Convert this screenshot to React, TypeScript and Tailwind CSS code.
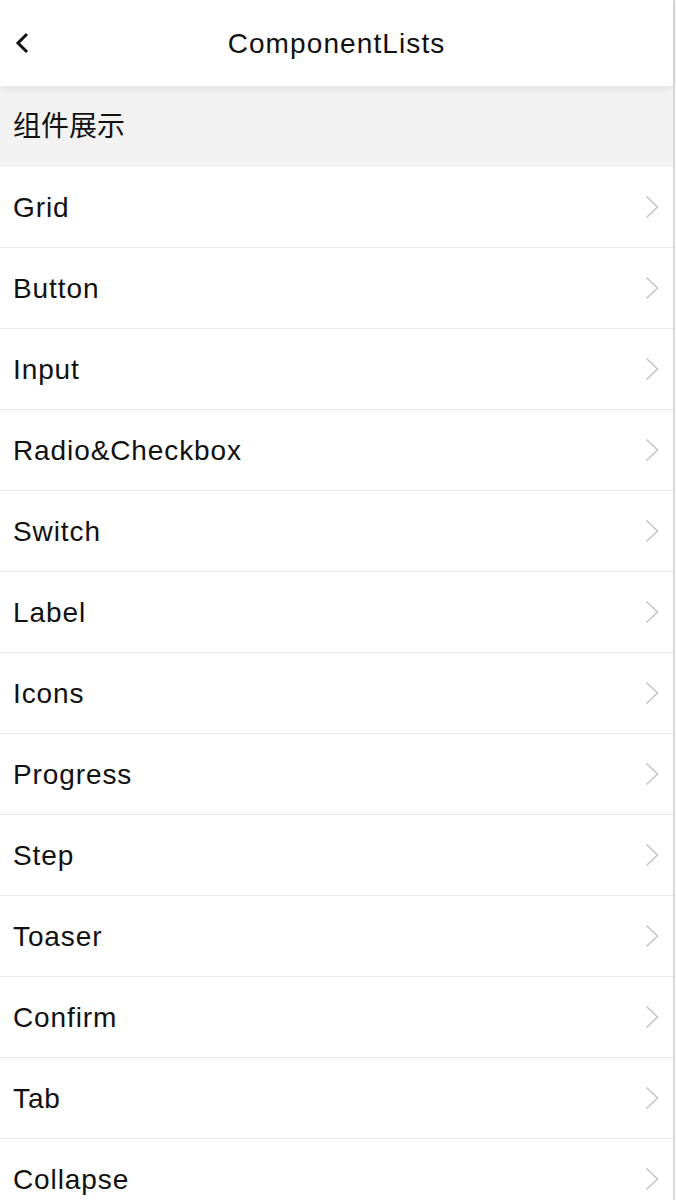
import React from 'react';

const items = [
  'Grid',
  'Button',
  'Input',
  'Radio&Checkbox',
  'Switch',
  'Label',
  'Icons',
  'Progress',
  'Step',
  'Toaser',
  'Confirm',
  'Tab',
  'Collapse',
];

const font = { fontFamily: '"Liberation Sans", "Noto Sans CJK SC", Arial, sans-serif' };

const ArrowRight = () => (
  <svg width="14" height="24" viewBox="0 0 14 24" fill="none">
    <polyline points="1.5,1.5 12.5,12 1.5,22.5" stroke="#c6c6c6" strokeWidth="1.6" strokeLinejoin="miter" />
  </svg>
);

const App: React.FC = () => {
  return (
    <div className="min-h-[1200px] w-[675px] border-r-2 border-[#d9d9d9] bg-white text-[#111]" style={font}>
      {/* Header */}
      <div className="relative z-10 flex h-[86px] items-center justify-center bg-white pt-[2px] shadow-[0_2px_8px_rgba(0,0,0,0.08)]">
        <svg className="absolute left-[15px] top-[32px]" width="16" height="22" viewBox="0 0 16 22" fill="none">
          <polyline points="12,2 3,11 12,20" stroke="#111" strokeWidth="3" />
        </svg>
        <span className="text-[28px] tracking-[1.1px]">ComponentLists</span>
      </div>

      {/* Section */}
      <div className="flex h-[81px] items-center bg-[#f2f2f2] px-[13px] text-[28px]">组件展示</div>

      {/* List */}
      <div>
        {items.map((item) => (
          <div
            key={item}
            className="flex h-[81px] items-center justify-between border-b border-[#e9e9e9] pl-[13px] pr-[14px] text-[28px]"
          >
            <span className="pt-[2px] tracking-[0.9px]">{item}</span>
            <ArrowRight />
          </div>
        ))}
      </div>
    </div>
  );
};

export default App;
